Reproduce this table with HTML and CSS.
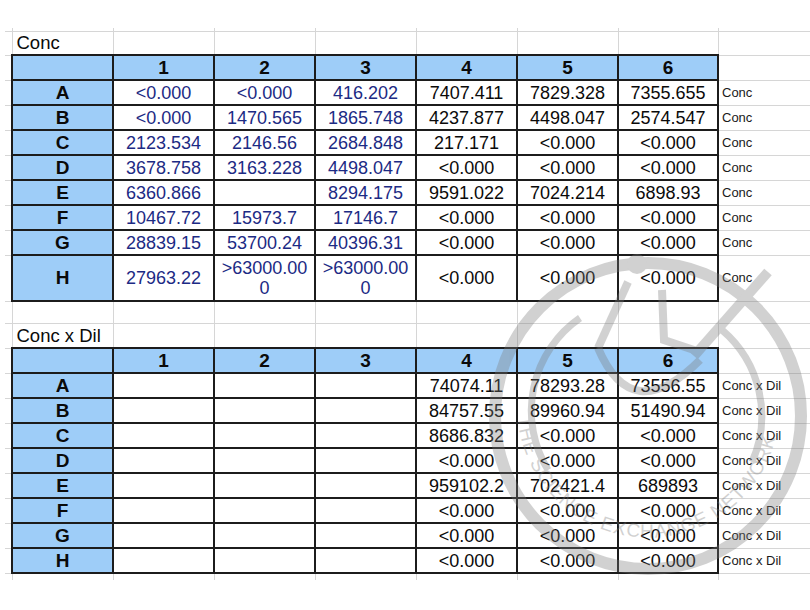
FILE: index.html
```html
<!DOCTYPE html>
<html>
<head>
<meta charset="utf-8">
<title>Conc sheet</title>
<link rel="stylesheet" href="styles.css">
</head>
<body>
<div class="sheet">
<table class="grid">
<colgroup>
<col class="c-sp"><col class="c-w"><col class="c-w"><col class="c-w"><col class="c-w"><col class="c-w"><col class="c-w"><col class="c-6"><col class="c-x">
</colgroup>
<tbody>
<tr class="r-top"><td class="sp"></td><td></td><td></td><td></td><td></td><td></td><td></td><td></td><td></td></tr>
<tr class="r-title"><td class="sp"></td><td class="title">Conc</td><td></td><td></td><td></td><td></td><td></td><td></td><td></td></tr>
<tr class="r"><td class="sp"></td><td class="b hd"></td><td class="b hd">1</td><td class="b hd">2</td><td class="b hd">3</td><td class="b hd">4</td><td class="b hd">5</td><td class="b hd">6</td><td></td></tr>
<tr class="r"><td class="sp"></td><td class="b hd">A</td><td class="b blue">&lt;0.000</td><td class="b blue">&lt;0.000</td><td class="b blue">416.202</td><td class="b">7407.411</td><td class="b">7829.328</td><td class="b">7355.655</td><td class="lbl">Conc</td></tr>
<tr class="r"><td class="sp"></td><td class="b hd">B</td><td class="b blue">&lt;0.000</td><td class="b blue">1470.565</td><td class="b blue">1865.748</td><td class="b">4237.877</td><td class="b">4498.047</td><td class="b">2574.547</td><td class="lbl">Conc</td></tr>
<tr class="r"><td class="sp"></td><td class="b hd">C</td><td class="b blue">2123.534</td><td class="b blue">2146.56</td><td class="b blue">2684.848</td><td class="b">217.171</td><td class="b">&lt;0.000</td><td class="b">&lt;0.000</td><td class="lbl">Conc</td></tr>
<tr class="r"><td class="sp"></td><td class="b hd">D</td><td class="b blue">3678.758</td><td class="b blue">3163.228</td><td class="b blue">4498.047</td><td class="b">&lt;0.000</td><td class="b">&lt;0.000</td><td class="b">&lt;0.000</td><td class="lbl">Conc</td></tr>
<tr class="r"><td class="sp"></td><td class="b hd">E</td><td class="b blue">6360.866</td><td class="b blue"></td><td class="b blue">8294.175</td><td class="b">9591.022</td><td class="b">7024.214</td><td class="b">6898.93</td><td class="lbl">Conc</td></tr>
<tr class="r"><td class="sp"></td><td class="b hd">F</td><td class="b blue">10467.72</td><td class="b blue">15973.7</td><td class="b blue">17146.7</td><td class="b">&lt;0.000</td><td class="b">&lt;0.000</td><td class="b">&lt;0.000</td><td class="lbl">Conc</td></tr>
<tr class="r"><td class="sp"></td><td class="b hd">G</td><td class="b blue">28839.15</td><td class="b blue">53700.24</td><td class="b blue">40396.31</td><td class="b">&lt;0.000</td><td class="b">&lt;0.000</td><td class="b">&lt;0.000</td><td class="lbl">Conc</td></tr>
<tr class="r-tall"><td class="sp"></td><td class="b hd">H</td><td class="b blue">27963.22</td><td class="b blue wrap">&gt;63000.000</td><td class="b blue wrap">&gt;63000.000</td><td class="b">&lt;0.000</td><td class="b">&lt;0.000</td><td class="b">&lt;0.000</td><td class="lbl">Conc</td></tr>
<tr class="r-blank"><td class="sp"></td><td></td><td></td><td></td><td></td><td></td><td></td><td></td><td></td></tr>
<tr class="r-title2"><td class="sp"></td><td class="title">Conc x Dil</td><td></td><td></td><td></td><td></td><td></td><td></td><td></td></tr>
<tr class="r"><td class="sp"></td><td class="b hd"></td><td class="b hd">1</td><td class="b hd">2</td><td class="b hd">3</td><td class="b hd">4</td><td class="b hd">5</td><td class="b hd">6</td><td></td></tr>
<tr class="r"><td class="sp"></td><td class="b hd">A</td><td class="b"></td><td class="b"></td><td class="b"></td><td class="b">74074.11</td><td class="b">78293.28</td><td class="b">73556.55</td><td class="lbl">Conc x Dil</td></tr>
<tr class="r"><td class="sp"></td><td class="b hd">B</td><td class="b"></td><td class="b"></td><td class="b"></td><td class="b">84757.55</td><td class="b">89960.94</td><td class="b">51490.94</td><td class="lbl">Conc x Dil</td></tr>
<tr class="r"><td class="sp"></td><td class="b hd">C</td><td class="b"></td><td class="b"></td><td class="b"></td><td class="b">8686.832</td><td class="b">&lt;0.000</td><td class="b">&lt;0.000</td><td class="lbl">Conc x Dil</td></tr>
<tr class="r"><td class="sp"></td><td class="b hd">D</td><td class="b"></td><td class="b"></td><td class="b"></td><td class="b">&lt;0.000</td><td class="b">&lt;0.000</td><td class="b">&lt;0.000</td><td class="lbl">Conc x Dil</td></tr>
<tr class="r"><td class="sp"></td><td class="b hd">E</td><td class="b"></td><td class="b"></td><td class="b"></td><td class="b">959102.2</td><td class="b">702421.4</td><td class="b">689893</td><td class="lbl">Conc x Dil</td></tr>
<tr class="r"><td class="sp"></td><td class="b hd">F</td><td class="b"></td><td class="b"></td><td class="b"></td><td class="b">&lt;0.000</td><td class="b">&lt;0.000</td><td class="b">&lt;0.000</td><td class="lbl">Conc x Dil</td></tr>
<tr class="r"><td class="sp"></td><td class="b hd">G</td><td class="b"></td><td class="b"></td><td class="b"></td><td class="b">&lt;0.000</td><td class="b">&lt;0.000</td><td class="b">&lt;0.000</td><td class="lbl">Conc x Dil</td></tr>
<tr class="r"><td class="sp"></td><td class="b hd">H</td><td class="b"></td><td class="b"></td><td class="b"></td><td class="b">&lt;0.000</td><td class="b">&lt;0.000</td><td class="b">&lt;0.000</td><td class="lbl">Conc x Dil</td></tr>
<tr class="r-bot"><td class="sp"></td><td></td><td></td><td></td><td></td><td></td><td></td><td></td><td></td></tr>
</tbody>
</table>
</div>
<svg class="watermark" width="810" height="610" viewBox="0 0 810 610" aria-hidden="true">
<defs>
<path id="ring-text" d="M 518 420 A 131 131 0 0 0 775 440"/>
</defs>
<g class="wm">
<circle cx="648" cy="416" r="153" fill="none" stroke-width="12"/>
<path d="M 580 318 A 113 113 0 0 0 548 470" fill="none" stroke-width="7"/>
<path d="M 722 330 A 113 113 0 0 1 752 462" fill="none" stroke-width="7"/>
<circle cx="637" cy="264" r="10" class="wm-fill"/>
<path d="M 628 282 L 598 348" fill="none" stroke-width="8"/>
<path d="M 662 290 L 664 340 L 700 352" fill="none" stroke-width="8"/>
<path d="M 694 356 L 768 272" fill="none" stroke-width="10"/>
<path d="M 598 348 Q 632 428 700 360" fill="none" stroke-width="8"/>
<text class="wm-text"><textPath href="#ring-text" startOffset="50%" text-anchor="middle">THE SCIENCE EXCHANGE NETWORK</textPath></text>
</g>
</svg>
</body>
</html>
```
FILE: styles.css
```css
html, body {
  margin: 0;
  padding: 0;
  background: #ffffff;
  overflow: hidden;
}

body {
  width: 810px;
  height: 610px;
  position: relative;
  font-family: "Liberation Sans", Arial, Helvetica, sans-serif;
}

.sheet {
  padding: 28px 0 0 5px;
}

.grid {
  border-collapse: collapse;
  table-layout: fixed;
  width: 813px;
}

.c-sp { width: 7px; }
.c-w { width: 101px; }
.c-6 { width: 100px; }
.c-x { width: 100px; }

.grid td {
  border: 1px solid #d6d6d6;
  padding: 0 3px;
  font-size: 18px;
  line-height: 20px;
  text-align: center;
  color: #0a0a0a;
  vertical-align: middle;
  overflow: hidden;
}

.grid td.sp {
  border-left: none;
  padding: 0;
}

.r-top td { border-top: none; height: 3px; padding: 0; }
.r-top td.sp { border: none; }
.r-bot td { border-bottom: none; height: 6px; padding: 0; }
.r-bot td.sp { border: none; }

.r-title td { height: 22px; }
.r-title2 td { height: 23px; }
.r td { height: 23px; }
.r-tall td { height: 44px; }
.r-blank td { height: 21px; }

.grid td.b {
  border: 2px solid #1c1c1c;
}

.grid td.hd {
  background: #9ecdf8;
  font-weight: bold;
  font-size: 19px;
  color: #0a0a0a;
}

.grid td.blue {
  color: #1c2a84;
}

.grid td.wrap {
  word-break: break-all;
  white-space: normal;
}

.grid td.title {
  text-align: left;
  padding-left: 4px;
  font-size: 18.5px;
  white-space: nowrap;
  overflow: visible;
}

.grid td.lbl {
  text-align: left;
  font-size: 13px;
  line-height: 16px;
  padding-left: 3px;
  white-space: nowrap;
  color: #1a1a1a;
}

.watermark {
  position: absolute;
  left: 0;
  top: 0;
  pointer-events: none;
}

.wm {
  stroke: #7a7a7a;
  opacity: 0.34;
}

.wm-fill {
  fill: #7a7a7a;
  stroke: none;
}

.wm-text {
  fill: #7a7a7a;
  stroke: none;
  font-family: "Liberation Sans", Arial, sans-serif;
  font-size: 19px;
  letter-spacing: 1px;
}
```
